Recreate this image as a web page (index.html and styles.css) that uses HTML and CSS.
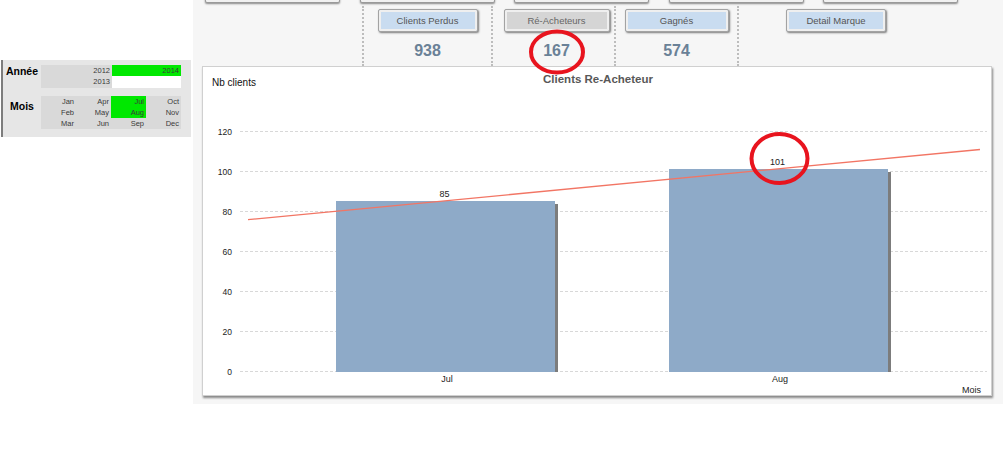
FILE: index.html
```html
<!DOCTYPE html>
<html lang="fr">
<head>
<meta charset="utf-8">
<title>Clients Re-Acheteur</title>
<link rel="stylesheet" href="styles.css">
</head>
<body>
<div class="page">
  <aside class="left">
    <div class="filters">
      <div class="frow">
        <div class="flabel">Année</div>
        <div class="years">
          <span class="c">2012</span><span class="c on">2014</span>
          <span class="c">2013</span><span class="c blank"></span>
        </div>
      </div>
      <div class="frow mrow">
        <div class="flabel mois">Mois</div>
        <div class="months">
          <span class="c">Jan</span><span class="c">Apr</span><span class="c on">Jul</span><span class="c">Oct</span>
          <span class="c">Feb</span><span class="c">May</span><span class="c on">Aug</span><span class="c">Nov</span>
          <span class="c">Mar</span><span class="c">Jun</span><span class="c">Sep</span><span class="c">Dec</span>
        </div>
      </div>
    </div>
  </aside>
  <main class="main">
    <div class="topbtns">
      <div class="tb"></div><div class="tb"></div><div class="tb"></div><div class="tb"></div><div class="tb"></div>
    </div>
    <div class="tabs">
      <div class="tab t1"><div class="btn w100">Clients Perdus</div><div class="num">938</div></div>
      <div class="tab t2"><div class="btn w106 grey">Ré-Acheteurs</div><div class="num">167</div></div>
      <div class="tab t3"><div class="btn w104">Gagnés</div><div class="num">574</div></div>
      <div class="tab t4"><div class="btn w100">Detail Marque</div></div>
    </div>
    <div class="chart">
      <svg class="plot" width="788" height="328" viewBox="0 0 788 328">
        <text x="395" y="16" text-anchor="middle" class="ttl">Clients Re-Acheteur</text>
        <text x="9" y="19" class="axt">Nb clients</text>
        <g class="grid">
          <line x1="37" y1="64.5" x2="784" y2="64.5"/>
          <line x1="37" y1="104.5" x2="784" y2="104.5"/>
          <line x1="37" y1="144.5" x2="784" y2="144.5"/>
          <line x1="37" y1="184.5" x2="784" y2="184.5"/>
          <line x1="37" y1="224.5" x2="784" y2="224.5"/>
          <line x1="37" y1="264.5" x2="784" y2="264.5"/>
          <line x1="37" y1="304.5" x2="784" y2="304.5"/>
        </g>
        <g class="ylab" text-anchor="end">
          <text x="29" y="67.5">120</text>
          <text x="29" y="107.5">100</text>
          <text x="29" y="147.5">80</text>
          <text x="29" y="187.5">60</text>
          <text x="29" y="227.5">40</text>
          <text x="29" y="267.5">20</text>
          <text x="29" y="307.5">0</text>
        </g>
        <rect x="352" y="137" width="3" height="168" class="shadow"/>
        <rect x="133" y="134" width="219" height="171" class="bar"/>
        <rect x="685" y="105" width="3" height="200" class="shadow"/>
        <rect x="466" y="102" width="219" height="203" class="bar"/>
        <line x1="45" y1="152.7" x2="777" y2="82.5" class="trend"/>
        <g class="vlab" text-anchor="middle">
          <text x="241.5" y="130">85</text>
          <text x="574.5" y="98">101</text>
          <text x="244" y="315">Jul</text>
          <text x="577" y="315">Aug</text>
        </g>
        <text x="778" y="326" text-anchor="end" class="vlab">Mois</text>
        <ellipse cx="576.5" cy="91.5" rx="28" ry="24.5" class="ring"/>
      </svg>
    </div>
    <svg class="mark" width="64" height="52" viewBox="0 0 64 52">
      <ellipse cx="32" cy="26" rx="26" ry="20.5" class="ring"/>
    </svg>
  </main>
</div>
</body>
</html>
```
FILE: styles.css
```css
body {
  margin: 0;
  background: #ffffff;
  font-family: "Liberation Sans", Arial, sans-serif;
}

.page {
  display: flex;
  width: 1003px;
  height: 460px;
  overflow: hidden;
}

.left {
  width: 193px;
  flex: none;
  padding-top: 60px;
  background: #ffffff;
}

.filters {
  margin-left: 1px;
  width: 188px;
  border-left: 2px solid #7d7d7d;
  background: #e6e6e6;
  padding: 5px 0 8px;
}

.frow {
  display: flex;
}

.mrow {
  margin-top: 8px;
}

.flabel {
  width: 38px;
  text-align: center;
  font-weight: bold;
  font-size: 10.5px;
  line-height: 12px;
  color: #000;
}

.flabel.mois {
  padding-top: 4px;
}

.years {
  display: grid;
  grid-template-columns: 71px 69px;
  grid-template-rows: 11px 12px;
  background: #d9d9d9;
}

.months {
  display: grid;
  grid-template-columns: repeat(4, 35px);
  grid-auto-rows: 11px;
  background: #d9d9d9;
}

.c {
  font-size: 7.5px;
  line-height: 11px;
  text-align: right;
  padding-right: 2px;
  color: #3a3a3a;
}

.on {
  background: #00e800;
}

.blank {
  background: #ffffff;
}

.main {
  flex: 1;
  position: relative;
  height: 404px;
  background: #f6f6f6;
}

.topbtns {
  display: flex;
  gap: 19.5px;
  padding-left: 12px;
  margin-top: -16px;
}

.tb {
  width: 135px;
  height: 19px;
  box-sizing: border-box;
  border: 1px solid #9a9a9a;
  border-radius: 2px;
  background: #f1f1f1;
  box-shadow: 0 1px 2px rgba(0, 0, 0, 0.45);
}

.tabs {
  display: flex;
  margin-top: 3px;
  padding-left: 169px;
  height: 60px;
}

.tab {
  box-sizing: border-box;
  border-left: 2px dotted #bdbdbd;
  display: flex;
  flex-direction: column;
  align-items: center;
  padding-top: 3px;
}

.t1 { width: 129px; }
.t2 { width: 123px; padding-left: 6px; }
.t3 { width: 123px; }
.t4 { width: 196px; }

.btn {
  height: 23px;
  box-sizing: border-box;
  border: 1px solid #a3a3a3;
  border-radius: 2px;
  background: #c9dcf0;
  box-shadow: inset 0 0 0 2px #efefef, 1px 1px 2px rgba(0, 0, 0, 0.5);
  font-size: 9.5px;
  line-height: 21px;
  text-align: center;
  color: #555;
}

.btn.grey {
  background: #d5d5d5;
  color: #666;
}

.w100 { width: 100px; }
.w104 { width: 104px; }
.w106 { width: 106px; }

.num {
  margin-top: 10px;
  font-size: 16px;
  font-weight: bold;
  line-height: 18px;
  color: #6a8197;
}

.chart {
  margin-left: 9px;
  width: 790px;
  height: 330px;
  box-sizing: border-box;
  border: 1px solid #d0d0d0;
  background: #ffffff;
  box-shadow: 1px 2px 2px rgba(0, 0, 0, 0.45);
}

.plot {
  display: block;
}

.ttl {
  font-family: "Liberation Sans", Arial, sans-serif;
  font-weight: bold;
  font-size: 11.5px;
  fill: #585858;
}

.axt {
  font-family: "Liberation Sans", Arial, sans-serif;
  font-size: 10px;
  fill: #111;
}

.grid line {
  stroke: #d8d8d8;
  stroke-width: 1;
  stroke-dasharray: 3 2;
}

.ylab text {
  font-family: "Liberation Sans", Arial, sans-serif;
  font-size: 8.5px;
  fill: #222;
}

.vlab,
.vlab text {
  font-family: "Liberation Sans", Arial, sans-serif;
  font-size: 9px;
  fill: #222;
}

.bar {
  fill: #8eaac8;
}

.shadow {
  fill: #7c7c7c;
}

.trend {
  stroke: #f27564;
  stroke-width: 1.3;
}

.ring {
  fill: none;
  stroke: #e8141e;
  stroke-width: 4;
}

.mark {
  position: absolute;
  left: 332px;
  top: 26px;
  z-index: 2;
}
```
